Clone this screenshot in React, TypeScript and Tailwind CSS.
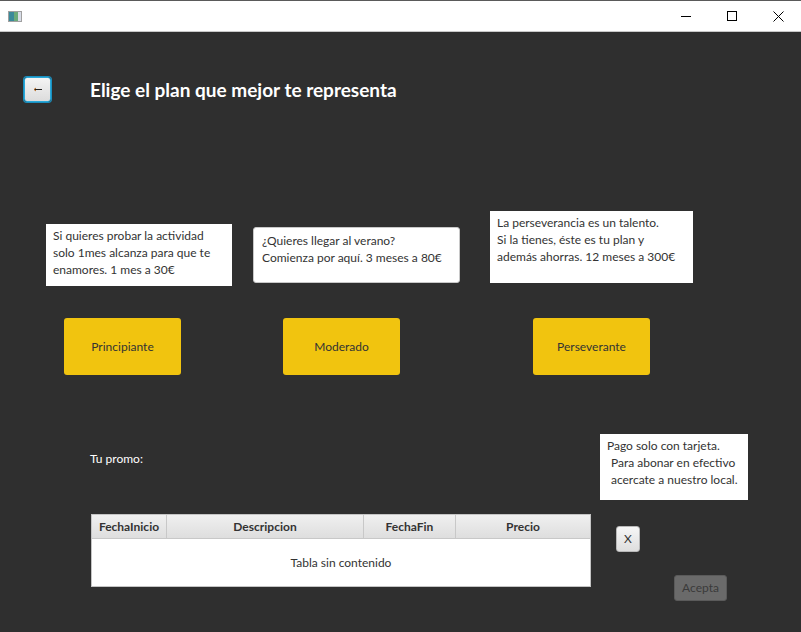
import React from "react";

const font = { fontFamily: "Lato, 'Noto Sans', sans-serif" };

function InfoBox({ lines, className }: { lines: string[]; className: string }) {
  return (
    <div className={`bg-white text-[12px] leading-[17px] text-[#333333] ${className}`}>
      {lines.map((l, i) => (
        <div key={i} className="whitespace-pre">{l}</div>
      ))}
    </div>
  );
}

function PlanButton({ label, className }: { label: string; className: string }) {
  return (
    <div className={`w-[117px] h-[57px] rounded-[3px] bg-[#f1c40f] flex items-center justify-center text-[12px] text-[#333333] ${className}`}>
      {label}
    </div>
  );
}

export default function App() {
  return (
    <div className="w-[801px] h-[632px] flex flex-col overflow-hidden bg-[#2f2f2f]" style={font}>
      {/* title bar */}
      <div className="h-[32px] bg-white border-t border-[#5a5a5a] border-b border-b-[#c8c8c8] flex items-center">
        <div className="ml-[8px] w-[14px] h-[11px] border border-[#a0a0a0] flex">
          <div className="w-[5px] bg-[#3a8a9a]" />
          <div className="w-[4px] bg-[#6aaa7a]" />
          <div className="flex-1 bg-[#d8dde8]" />
        </div>
        <div className="flex-1" />
        <div className="w-[46px] h-full flex items-center justify-center">
          <div className="w-[10px] h-[1px] bg-black" />
        </div>
        <div className="w-[46px] h-full flex items-center justify-center">
          <div className="w-[10px] h-[10px] border border-black" />
        </div>
        <div className="w-[46px] h-full flex items-center justify-center">
          <svg width="11" height="11" viewBox="0 0 11 11">
            <path d="M0.5 0.5 L10.5 10.5 M10.5 0.5 L0.5 10.5" stroke="black" strokeWidth="1" />
          </svg>
        </div>
      </div>

      {/* header row */}
      <div className="flex items-center mt-[45px]">
        <div className="ml-[24px] w-[27px] h-[25px] rounded-[3px] border border-[#2aa8d8] shadow-[0_0_0_1px_#1a90c0] bg-gradient-to-b from-[#f4f4f4] to-[#dcdcdc] flex items-center justify-center">
          <svg width="10" height="5" viewBox="0 0 10 5">
            <path d="M1 2.5 H9" stroke="#222" strokeWidth="1" />
            <path d="M1 2.5 L3 1 M1 2.5 L3 4" stroke="#b86a20" strokeWidth="1" />
          </svg>
        </div>
        <div className="ml-[39px] text-white font-bold text-[19px] leading-[24px]">Elige el plan que mejor te representa</div>
      </div>

      {/* info boxes */}
      <div className="flex items-start h-[74px] mt-[109px]">
        <InfoBox
          className="ml-[46px] mt-[13px] w-[186px] h-[62px] pl-[7px] pt-[3px]"
          lines={["Si quieres probar la actividad", "solo 1mes alcanza para que te", "enamores. 1 mes a 30€"]}
        />
        <InfoBox
          className="ml-[21px] mt-[16px] w-[207px] h-[56px] pl-[8px] pt-[4px] rounded-[3px] border border-[#c8c8c8]"
          lines={["¿Quieres llegar al verano?", "Comienza por aquí. 3 meses a 80€"]}
        />
        <InfoBox
          className="ml-[30px] w-[203px] h-[72px] pl-[7px] pt-[3px]"
          lines={["La perseverancia es un talento.", "Si la tienes, éste es tu plan y", "además ahorras. 12 meses a 300€"]}
        />
      </div>

      {/* plan buttons */}
      <div className="flex mt-[33px]">
        <PlanButton label="Principiante" className="ml-[64px]" />
        <PlanButton label="Moderado" className="ml-[102px]" />
        <PlanButton label="Perseverante" className="ml-[133px]" />
      </div>

      {/* promo row */}
      <div className="flex items-start mt-[59px]">
        <div className="ml-[90px] mt-[17px] text-white text-[12px] leading-[16px]">Tu promo:</div>
        <div className="ml-[457px] w-[148px] h-[66px] bg-white text-[12px] leading-[17px] text-[#333333] pt-[3px] pl-[7px]">
          <div className="whitespace-pre">Pago solo con tarjeta.</div>
          <div className="whitespace-pre pl-[4px]">Para abonar en efectivo</div>
          <div className="whitespace-pre pl-[4px]">acercate a nuestro local.</div>
        </div>
      </div>

      {/* table row */}
      <div className="flex items-start mt-[14px]">
        <div className="ml-[91px] w-[500px] h-[73px] border border-[#c4c4c4] bg-white flex flex-col">
          <div className="h-[24px] flex bg-gradient-to-b from-[#f0f0f0] to-[#dedede] border-b border-[#c8c8c8] text-[12px] font-bold text-[#333333]">
            <div className="w-[75px] flex items-center justify-center border-r border-[#c8c8c8]">FechaInicio</div>
            <div className="w-[197px] flex items-center justify-center border-r border-[#c8c8c8]">Descripcion</div>
            <div className="w-[92px] flex items-center justify-center border-r border-[#c8c8c8]">FechaFin</div>
            <div className="flex-1 flex items-center justify-center">Precio</div>
          </div>
          <div className="flex-1 flex items-center justify-center text-[12px] text-[#333333]">Tabla sin contenido</div>
        </div>
        <div className="flex flex-col">
          <div className="ml-[25px] mt-[12px] w-[24px] h-[26px] rounded-[3px] border border-[#b8b8b8] bg-gradient-to-b from-[#f6f6f6] to-[#dedede] flex items-center justify-center text-[12px] text-[#333333]">
            X
          </div>
          <div className="ml-[83px] mt-[23px] w-[53px] h-[26px] rounded-[3px] border border-[#5a5a5a] bg-[#6a6a6a] flex items-center justify-center text-[12px] text-[#3a3a3a]">
            Acepta
          </div>
        </div>
      </div>
    </div>
  );
}
